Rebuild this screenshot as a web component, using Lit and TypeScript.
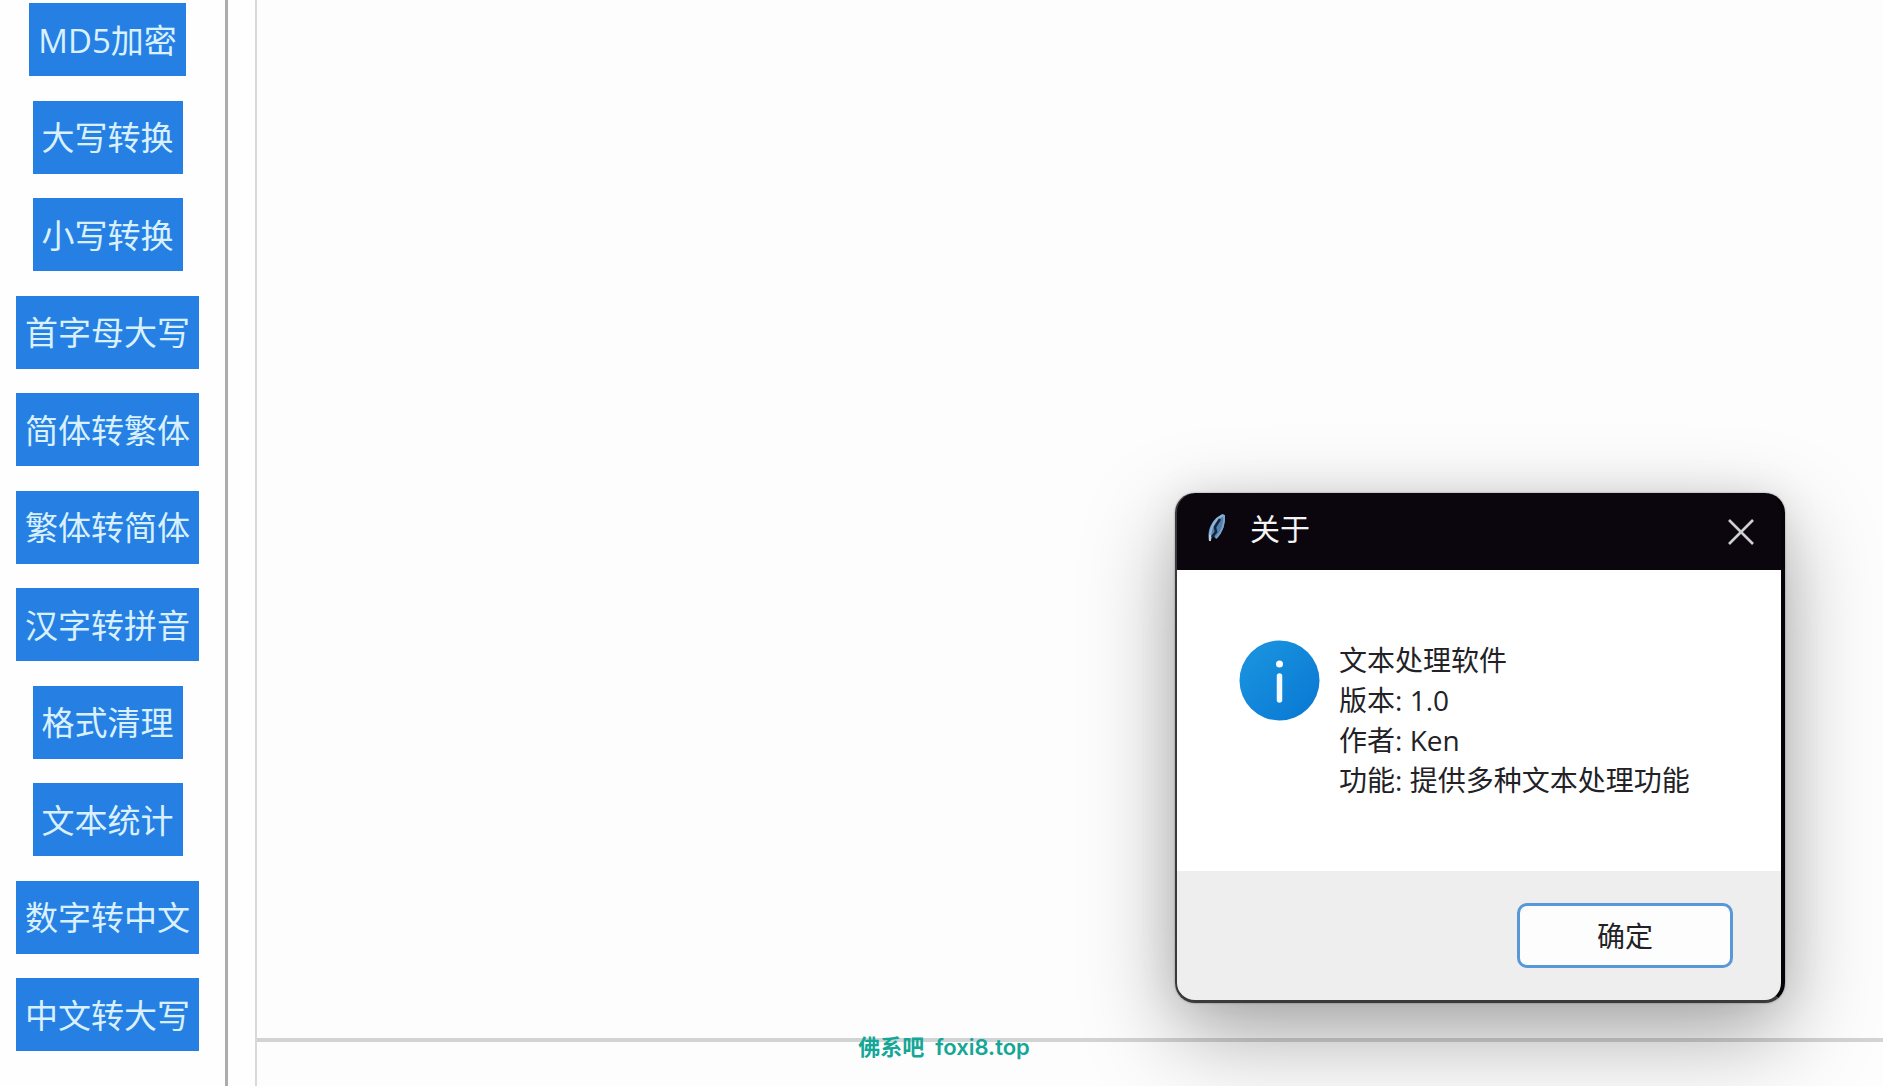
import { LitElement, html, css } from "lit";
import { customElement, state } from "lit/decorators.js";

const TOOLS = [
  "MD5加密",
  "大写转换",
  "小写转换",
  "首字母大写",
  "简体转繁体",
  "繁体转简体",
  "汉字转拼音",
  "格式清理",
  "文本统计",
  "数字转中文",
  "中文转大写",
];

@customElement("tool-sidebar")
class ToolSidebar extends LitElement {
  static styles = css`
    :host {
      display: flex;
      box-sizing: border-box;
      width: 228px;
      padding: 3px 10px 35px 0;
      border-right: 3px solid #acacac;
    }
    .list {
      flex: 1;
      display: flex;
      flex-direction: column;
      align-items: center;
      justify-content: space-between;
    }
    .tool {
      height: 73px;
      padding: 2px 9px 0;
      border: 0;
      border-radius: 0;
      background: #2680e3;
      color: #d9f1ff;
      font-family: "Open Sans", "Noto Sans CJK SC", sans-serif;
      font-size: 33px;
      font-weight: 400;
      line-height: 40px;
      white-space: nowrap;
    }
  `;
  render() {
    return html`<nav class="list">
      ${TOOLS.map((t) => html`<button class="tool" type="button">${t}</button>`)}
    </nav>`;
  }
}

@customElement("about-dialog")
class AboutDialog extends LitElement {
  static styles = css`
    :host {
      display: block;
      font-family: "Open Sans", "Noto Sans CJK SC", sans-serif;
    }
    .window {
      overflow: hidden;
      border: solid #3a3a3c;
      border-width: 0 4px 3px 2px;
      border-right-color: #050308;
      border-radius: 20px;
      background: linear-gradient(#0b060d 77px, #eeeeee 77px);
      box-shadow:
        0 0 2px rgba(0, 0, 0, 0.4),
        0 32px 90px rgba(0, 0, 0, 0.34),
        0 0 40px rgba(0, 0, 0, 0.08);
    }
    .bar {
      display: flex;
      align-items: center;
      height: 77px;
      padding: 0 26px 0 30px;
      color: #f4f4f4;
    }
    .feather {
      width: 20px;
      height: 32px;
      margin: 0 23px 10px 0;
    }
    .title {
      flex: 1;
      margin: 0;
      font-size: 30px;
      font-weight: 400;
      line-height: 40px;
      padding-bottom: 5px;
    }
    .close {
      display: flex;
      padding: 0;
      border: 0;
      background: none;
    }
    .body {
      display: flex;
      gap: 19px;
      padding: 70px 62px 71px;
      background: #ffffff;
      color: #222226;
      font-size: 28px;
      line-height: 40px;
    }
    .info {
      flex: none;
      width: 81px;
      height: 81px;
    }
    .body p {
      margin: 0;
      white-space: nowrap;
    }
    .foot {
      display: flex;
      justify-content: flex-end;
      padding: 32px 48px;
    }
    .ok {
      width: 216px;
      height: 65px;
      padding: 0 0 2px;
      border: 3px solid #5897d8;
      border-radius: 10px;
      background: #fdfdfd;
      color: #222226;
      font: inherit;
      font-size: 28px;
    }
  `;
  private dismiss() {
    this.dispatchEvent(new CustomEvent("dismiss"));
  }
  render() {
    return html`<section class="window" role="dialog" aria-labelledby="title">
      <header class="bar">
        <svg class="feather" viewBox="0 0 20 32" aria-hidden="true">
          <path d="M2 30C0 20 4 7 17 3C19 12 16 22 9 28L6 24L4 29Z" fill="#4f80b0" />
          <path d="M16 4C8 8 4 15 3 24" fill="none" stroke="#8fb4d6" stroke-width="2.500" />
          <path d="M17 4C18 12 15 21 9 27" fill="none" stroke="#7ea3c4" stroke-width="2" />
          <path d="M13 8L8 16L9 21L5 26" fill="none" stroke="#14253a" stroke-width="2.500" />
          <path d="M3 24V30" stroke="#c4ccd2" stroke-width="2" />
        </svg>
        <h1 class="title" id="title">关于</h1>
        <button class="close" type="button" aria-label="关闭" @click=${this.dismiss}>
          <svg width="28" height="28" viewBox="0 0 28 28" aria-hidden="true">
            <path d="M2 2L26 26M26 2L2 26" stroke="#cfcfd1" stroke-width="2.600" />
          </svg>
        </button>
      </header>
      <div class="body">
        <svg class="info" viewBox="0 0 81 81" aria-hidden="true">
          <defs>
            <linearGradient id="g" x1="0" y1="0" x2="1" y2="1">
              <stop offset="0.200" stop-color="#1890de" />
              <stop offset="0.900" stop-color="#0a7ad4" />
            </linearGradient>
          </defs>
          <circle cx="40.500" cy="40.500" r="40" fill="url(#g)" />
          <circle cx="40.500" cy="24" r="3.500" fill="#fff" />
          <path d="M40.500 36V60" stroke="#f2faff" stroke-width="5.500" stroke-linecap="round" />
        </svg>
        <p>文本处理软件<br />版本: 1.0<br />作者: Ken<br />功能: 提供多种文本处理功能</p>
      </div>
      <footer class="foot">
        <button class="ok" type="button" @click=${this.dismiss}>确定</button>
      </footer>
    </section>`;
  }
}

@customElement("app-root")
class AppRoot extends LitElement {
  @state() private aboutOpen = true;

  static styles = css`
    :host {
      display: block;
    }
    .page {
      position: relative;
      display: flex;
      min-height: 100vh;
      overflow: hidden;
      background: #fefefe;
    }
    .work {
      flex: 1;
      display: flex;
      flex-direction: column;
      margin-left: 27px;
      border-left: 2px solid #d9d9d9;
      background: #fdfdfd;
    }
    .editor {
      flex: 1;
      border-bottom: 4px solid #d0d4d4;
    }
    .status {
      height: 44px;
    }
    .about {
      position: absolute;
      right: 98px;
      bottom: 83px;
      width: 610px;
    }
    .mark {
      position: absolute;
      left: 0;
      right: 0;
      bottom: 23px;
      padding-left: 5px;
      text-align: center;
      color: #14a697;
      font-family: "Inter", "Noto Sans CJK SC", sans-serif;
      font-size: 22px;
      font-weight: 600;
      line-height: 32px;
      white-space: pre;
    }
  `;
  render() {
    return html`<div class="page">
      <tool-sidebar></tool-sidebar>
      <main class="work">
        <div class="editor"></div>
        <div class="status"></div>
      </main>
      ${this.aboutOpen
        ? html`<about-dialog class="about" @dismiss=${() => (this.aboutOpen = false)}></about-dialog>`
        : ""}
      <div class="mark">佛系吧  foxi8.top</div>
    </div>`;
  }
}
